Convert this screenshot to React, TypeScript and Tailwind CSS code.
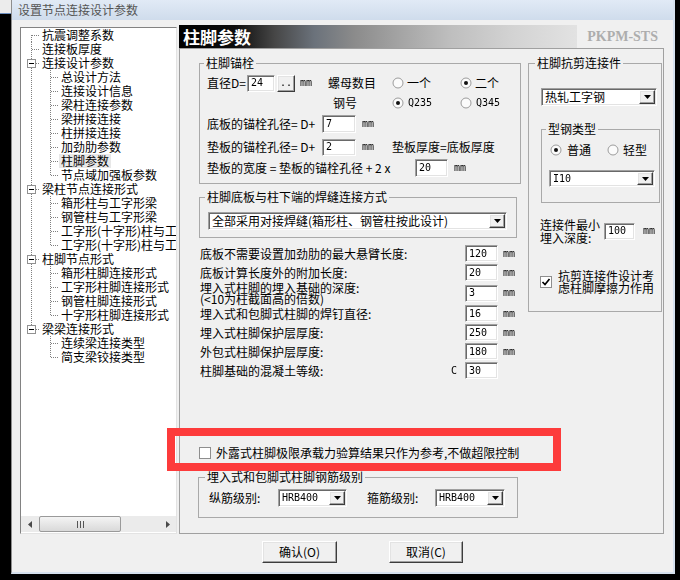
import React from "react";

type TreeNode = { label: string; children?: string[] };
type Vert = "full" | "top" | "bottom" | "none";

const TREE: TreeNode[] = [
  { label: "抗震调整系数" },
  { label: "连接板厚度" },
  {
    label: "连接设计参数",
    children: [
      "总设计方法",
      "连接设计信息",
      "梁柱连接参数",
      "梁拼接连接",
      "柱拼接连接",
      "加劲肋参数",
      "柱脚参数",
      "节点域加强板参数",
    ],
  },
  {
    label: "梁柱节点连接形式",
    children: [
      "箱形柱与工字形梁",
      "钢管柱与工字形梁",
      "工字形(十字形)柱与工字形梁",
      "工字形(十字形)柱与工字形梁(弱轴)",
    ],
  },
  {
    label: "柱脚节点形式",
    children: ["箱形柱脚连接形式", "工字形柱脚连接形式", "钢管柱脚连接形式", "十字形柱脚连接形式"],
  },
  { label: "梁梁连接形式", children: ["连续梁连接类型", "简支梁铰接类型"] },
];

const SELECTED = "柱脚参数";

// SimSun-like half-width latin (6px per char); grayscale drops the colour fringes of thin stems
const MONO = "font-['DejaVu_Sans_Mono',monospace] text-[10px] grayscale";

const SUNKEN =
  "border border-t-[#a0a0a0] border-l-[#a0a0a0] border-r-white border-b-white bg-white shadow-[inset_1px_1px_0_#696969,inset_-1px_-1px_0_#e3e3e3]";
const RAISED =
  "border border-t-white border-l-white border-r-[#3c3c3c] border-b-[#3c3c3c] bg-[#f0f0f0] shadow-[inset_-1px_-1px_0_#a0a0a0,inset_1px_1px_0_#e3e3e3]";

function Connector({ v, h, box }: { v: Vert; h?: boolean; box?: boolean }) {
  const dot = {
    stroke: "#808080",
    strokeWidth: 1,
    strokeDasharray: "1 1",
    shapeRendering: "crispEdges" as const,
  };
  return (
    <svg width="19" height="14" viewBox="0 0 19 14" className="shrink-0">
      {v === "full" && <line x1="10.5" y1="0" x2="10.5" y2="14" {...dot} />}
      {v === "top" && <line x1="10.5" y1="0" x2="10.5" y2="8" {...dot} />}
      {v === "bottom" && <line x1="10.5" y1="7" x2="10.5" y2="14" {...dot} />}
      {h && <line x1="11" y1="7.5" x2="19" y2="7.5" {...dot} />}
      {box && (
        <>
          <rect x="6.5" y="3.5" width="8" height="8" fill="#fff" stroke="#919191" shapeRendering="crispEdges" />
          <line x1="8" y1="7.5" x2="13" y2="7.5" stroke="#000" shapeRendering="crispEdges" />
        </>
      )}
    </svg>
  );
}

function TreeRows() {
  const rows: React.ReactNode[] = [];
  TREE.forEach((node, i) => {
    const lastRoot = i === TREE.length - 1;
    const v: Vert = i === 0 ? "bottom" : lastRoot ? "top" : "full";
    rows.push(
      <div key={`r${i}`} className="flex h-[14px] items-center">
        <Connector v={v} h box={!!node.children} />
        <span className="px-[2px] leading-[14px] whitespace-nowrap">{node.label}</span>
      </div>,
    );
    node.children?.forEach((c, j) => {
      const lastChild = j === node.children!.length - 1;
      rows.push(
        <div key={`r${i}-${j}`} className="flex h-[14px] items-center">
          <Connector v={lastRoot ? "none" : "full"} />
          <Connector v={lastChild ? "top" : "full"} h />
          <span
            className={`h-[14px] px-[2px] leading-[14px] whitespace-nowrap ${
              c === SELECTED ? "bg-[#e8e8e8]" : ""
            }`}
          >
            {c}
          </span>
        </div>,
      );
    });
  });
  return <>{rows}</>;
}

function Field({ value, w, h = "h-[17px]" }: { value: string; w: string; h?: string }) {
  return (
    <div className={`flex shrink-0 items-center pl-[3px] leading-none ${SUNKEN} ${w} ${h}`}>
      <span className={MONO}>{value}</span>
    </div>
  );
}

function Combo({ value, w, h = "h-[18px]", mono }: { value: string; w: string; h?: string; mono?: boolean }) {
  return (
    <div className={`flex shrink-0 items-stretch p-[1px] ${SUNKEN} ${w} ${h}`}>
      <div className="flex flex-1 items-center overflow-hidden pl-[2px] whitespace-nowrap">
        <span className={mono ? MONO : ""}>{value}</span>
      </div>
      <div className={`flex w-[16px] items-center justify-center ${RAISED}`}>
        <svg width="7" height="4" viewBox="0 0 7 4">
          <path d="M0 0h7L3.5 4z" fill="#000" />
        </svg>
      </div>
    </div>
  );
}

function Radio({ on }: { on?: boolean }) {
  return (
    <svg width="12" height="12" viewBox="0 0 12 12" className="shrink-0">
      <circle cx="6" cy="6" r="5" fill="#fbfbfb" stroke="#9c9c9c" />
      {on && <circle cx="6" cy="6" r="2" fill="#111" />}
    </svg>
  );
}

function RadioOpt({
  label,
  on,
  w,
  gap = "ml-[3px]",
  mono,
}: {
  label: string;
  on?: boolean;
  w: string;
  gap?: string;
  mono?: boolean;
}) {
  return (
    <div className={`flex items-center ${w}`}>
      <Radio on={on} />
      <span className={`whitespace-nowrap ${gap} ${mono ? MONO : ""}`}>{label}</span>
    </div>
  );
}

function Check({ on }: { on?: boolean }) {
  return (
    <svg width="12" height="12" viewBox="0 0 12 12" className="shrink-0">
      <rect x="0.5" y="0.5" width="11" height="11" fill="#fff" stroke="#8e8e8e" shapeRendering="crispEdges" />
      {on && <path d="M2.5 6l2.5 2.5L9.5 3" stroke="#000" strokeWidth="1.7" fill="none" />}
    </svg>
  );
}

function Btn({ children, w, h = "h-[22px]" }: { children: React.ReactNode; w: string; h?: string }) {
  return (
    <button type="button" className={`flex shrink-0 items-center justify-center leading-none ${RAISED} ${w} ${h}`}>
      {children}
    </button>
  );
}

function Mm({ className = "" }: { className?: string }) {
  return <span className={`${MONO} ${className}`}>mm</span>;
}

function FormRow({ label, value, h = "h-[19px]", two }: { label: string; value: string; h?: string; two?: string }) {
  return (
    <div className={`flex items-center ${h}`}>
      <div className="w-[265px] whitespace-nowrap">
        {two ? (
          <div className="leading-[11px]">
            <div>{label}</div>
            <div>{two}</div>
          </div>
        ) : (
          label
        )}
      </div>
      <Field value={value} w="w-[33px]" />
      <Mm className="ml-[5px]" />
    </div>
  );
}

export default function App() {
  return (
    <div className="relative flex h-[580px] w-[680px] overflow-hidden bg-black font-['Noto_Sans_CJK_SC',sans-serif] text-[12px] leading-[14px] text-black">
      <div className="w-[11px] shrink-0">
        <div className="h-[14px] border-b border-[#6d8fbf] bg-[#ececec]" />
      </div>

      <div className="flex h-[574px] w-[664px] shrink-0 flex-col border-l border-r-2 border-b-2 border-l-[#8e8e8e] border-r-[#d6e1ee] border-b-[#d6e1ee]">
        <div className="flex h-[20px] shrink-0 items-center bg-[linear-gradient(#e1eaf6,#cfdcec)] pl-[6px] text-[12px] text-[#555]">
          设置节点连接设计参数
        </div>

        <div className="flex flex-1 flex-col bg-[#f0f0f0]">
          <div className="flex items-start">
            {/* tree */}
            <div className="mt-[7px] ml-[8px] flex h-[507px] w-[157px] flex-col border border-t-[#828282] border-l-[#828282] border-r-[#e3e3e3] border-b-[#e3e3e3] bg-white pb-[1px]">
              <div className="flex-1 overflow-hidden">
                <TreeRows />
              </div>
              <div className="flex h-[16px] shrink-0 items-stretch bg-[#ebebeb]">
                <div className="flex w-[17px] items-center justify-center">
                  <svg width="4" height="7" viewBox="0 0 4 7">
                    <path d="M4 0v7L0 3.5z" fill="#4a4a4a" />
                  </svg>
                </div>
                <div className="ml-[1px] flex w-[82px] items-center justify-center rounded-[2px] border border-[#9a9a9a] bg-[linear-gradient(#f4f4f4,#d9d9d9)]">
                  <svg width="7" height="7" viewBox="0 0 7 7">
                    <path d="M0.5 0v7M3.5 0v7M6.5 0v7" stroke="#555" />
                  </svg>
                </div>
                <div className="flex-1" />
                <div className="flex w-[17px] items-center justify-center">
                  <svg width="4" height="7" viewBox="0 0 4 7">
                    <path d="M0 0v7L4 3.5z" fill="#4a4a4a" />
                  </svg>
                </div>
              </div>
            </div>

            {/* main panel */}
            <div className="mt-[5px] ml-[2px] flex w-[485px] flex-col">
              <div className="flex h-[23px] items-stretch">
                <div className="flex w-[398px] shrink-0 items-center bg-[linear-gradient(to_right,#000_0%,#0c0c0c_14%,#464646_24%,#6b727b_34%,#8b8b8b_44%,#a3a3a3_55%,#bebebe_68%,#d3d3d3_84%,#e2e2e2_100%)] pl-[4px] text-[17px] font-bold text-white">
                  柱脚参数
                </div>
                <div className="flex flex-1 items-center justify-end pr-[6px] font-['Liberation_Serif',serif] text-[14px] font-bold whitespace-nowrap text-[#adadad]">
                  PKPM-STS
                </div>
              </div>

              <div className="flex h-[486px] flex-col border border-[#a0a0a0]">
                <div className="mt-[7px] ml-[19px] flex items-start">
                  {/* left column */}
                  <div className="flex w-[318px] flex-col">
                    <fieldset className="h-[128px] border border-[#a9a9a9]">
                      <legend className="ml-[4px] px-[2px] leading-[14px]">柱脚锚栓</legend>
                      <div className="flex flex-col pl-[7px]">
                        <div className="mt-[3px] flex h-[20px] items-center">
                          <span className="w-[40px] whitespace-nowrap">直径D=</span>
                          <Field value="24" w="w-[28px]" />
                          <div className="ml-[2px]">
                            <Btn w="w-[18px]" h="h-[17px]">
                              <span className={MONO}>..</span>
                            </Btn>
                          </div>
                          <Mm className="ml-[5px] w-[28px]" />
                          <span className="w-[64px] whitespace-nowrap">螺母数目</span>
                          <RadioOpt label="一个" w="w-[68px]" />
                          <RadioOpt label="二个" on w="w-[60px]" />
                        </div>
                        <div className="ml-[126px] flex h-[20px] items-center">
                          <span className="w-[59px]">钢号</span>
                          <RadioOpt label="Q235" on mono w="w-[68px]" gap="ml-[4px]" />
                          <RadioOpt label="Q345" mono w="w-[60px]" gap="ml-[4px]" />
                        </div>
                        <div className="mt-[1px] flex h-[20px] items-center">
                          <span className="w-[115px] whitespace-nowrap">底板的锚栓孔径= D+</span>
                          <Field value="7" w="w-[34px]" h="h-[18px]" />
                          <Mm className="ml-[6px]" />
                        </div>
                        <div className="mt-[3px] flex h-[20px] items-center">
                          <span className="w-[115px] whitespace-nowrap">垫板的锚栓孔径= D+</span>
                          <Field value="2" w="w-[34px]" />
                          <Mm className="ml-[6px] w-[30px]" />
                          <span className="whitespace-nowrap">垫板厚度=底板厚度</span>
                        </div>
                        <div className="mt-[1px] flex h-[20px] items-center">
                          <span className="w-[208px] whitespace-nowrap">垫板的宽度 = 垫板的锚栓孔径 + 2 x</span>
                          <Field value="20" w="w-[33px]" h="h-[18px]" />
                          <Mm className="ml-[6px]" />
                        </div>
                      </div>
                    </fieldset>

                    <fieldset className="mt-[6px] h-[48px] border border-[#a9a9a9]">
                      <legend className="ml-[5px] px-[2px] leading-[14px]">柱脚底板与柱下端的焊缝连接方式</legend>
                      <div className="mt-[8px] ml-[8px]">
                        <Combo value="全部采用对接焊缝(箱形柱、钢管柱按此设计)" w="w-[299px]" />
                      </div>
                    </fieldset>

                    <div className="mt-[6px] flex flex-col pl-[1px]">
                      <FormRow label="底板不需要设置加劲肋的最大悬臂长度:" value="120" />
                      <FormRow label="底板计算长度外的附加长度:" value="20" />
                      <FormRow label="埋入式柱脚的埋入基础的深度:" two="(<10为柱截面高的倍数)" value="3" h="h-[22px]" />
                      <FormRow label="埋入式和包脚式柱脚的焊钉直径:" value="16" />
                      <FormRow label="埋入式柱脚保护层厚度:" value="250" />
                      <FormRow label="外包式柱脚保护层厚度:" value="180" />
                      <div className="flex h-[19px] items-center">
                        <span className="w-[251px] whitespace-nowrap">柱脚基础的混凝土等级:</span>
                        <span className={`w-[14px] ${MONO}`}>C</span>
                        <Field value="30" w="w-[33px]" />
                      </div>
                    </div>
                  </div>

                  {/* right column */}
                  <fieldset className="ml-[11px] h-[256px] w-[134px] border border-[#a9a9a9]">
                    <legend className="ml-[6px] px-[2px] leading-[14px]">柱脚抗剪连接件</legend>
                    <div className="mt-[18px] ml-[12px]">
                      <Combo value="热轧工字钢" w="w-[116px]" />
                    </div>
                    <fieldset className="mt-[16px] ml-[12px] h-[81px] w-[119px] border border-[#a9a9a9]">
                      <legend className="ml-[4px] px-[2px] leading-[14px]">型钢类型</legend>
                      <div className="mt-[5px] ml-[8px] flex h-[18px] items-center">
                        <RadioOpt label="普通" on w="w-[57px]" gap="ml-[5px]" />
                        <RadioOpt label="轻型" w="w-[50px]" gap="ml-[4px]" />
                      </div>
                      <div className="mt-[11px] ml-[7px]">
                        <Combo value="I10" mono w="w-[106px]" h="h-[17px]" />
                      </div>
                    </fieldset>
                    <div className="mt-[15px] ml-[11px] flex h-[26px] items-center">
                      <div className="w-[64px] leading-[13px] whitespace-nowrap">
                        <div>连接件最小</div>
                        <div>埋入深度:</div>
                      </div>
                      <Field value="100" w="w-[31px]" />
                      <Mm className="ml-[8px]" />
                    </div>
                    <div className="mt-[26px] ml-[11px] flex items-center">
                      <Check on />
                      <div className="ml-[6px] leading-[12px] whitespace-nowrap">
                        <div>抗剪连接件设计考</div>
                        <div>虑柱脚摩擦力作用</div>
                      </div>
                    </div>
                  </fieldset>
                </div>

                <div className="mt-[66px] ml-[19px] flex h-[14px] items-center">
                  <Check />
                  <span className="ml-[5px] whitespace-nowrap">外露式柱脚极限承载力验算结果只作为参考,不做超限控制</span>
                </div>

                <fieldset className="mt-[10px] ml-[18px] h-[48px] w-[320px] border border-[#a9a9a9]">
                  <legend className="ml-[6px] px-[2px] leading-[14px]">埋入式和包脚式柱脚钢筋级别</legend>
                  <div className="mt-[5px] ml-[10px] flex h-[18px] items-center">
                    <span className="w-[69px] whitespace-nowrap">纵筋级别:</span>
                    <Combo value="HRB400" mono w="w-[69px]" />
                    <span className="ml-[20px] w-[68px] whitespace-nowrap">箍筋级别:</span>
                    <Combo value="HRB400" mono w="w-[70px]" />
                  </div>
                </fieldset>
              </div>
            </div>
          </div>

          <div className="mt-[7px] ml-[250px] flex">
            <Btn w="w-[75px]">确认(O)</Btn>
            <div className="ml-[52px]">
              <Btn w="w-[74px]">取消(C)</Btn>
            </div>
          </div>
        </div>
      </div>

      {/* red annotation frame over the dialog */}
      <div className="pointer-events-none absolute top-[428px] left-[167px] h-[43px] w-[394px] border-[8px] border-[#fd3b3b]" />
    </div>
  );
}
